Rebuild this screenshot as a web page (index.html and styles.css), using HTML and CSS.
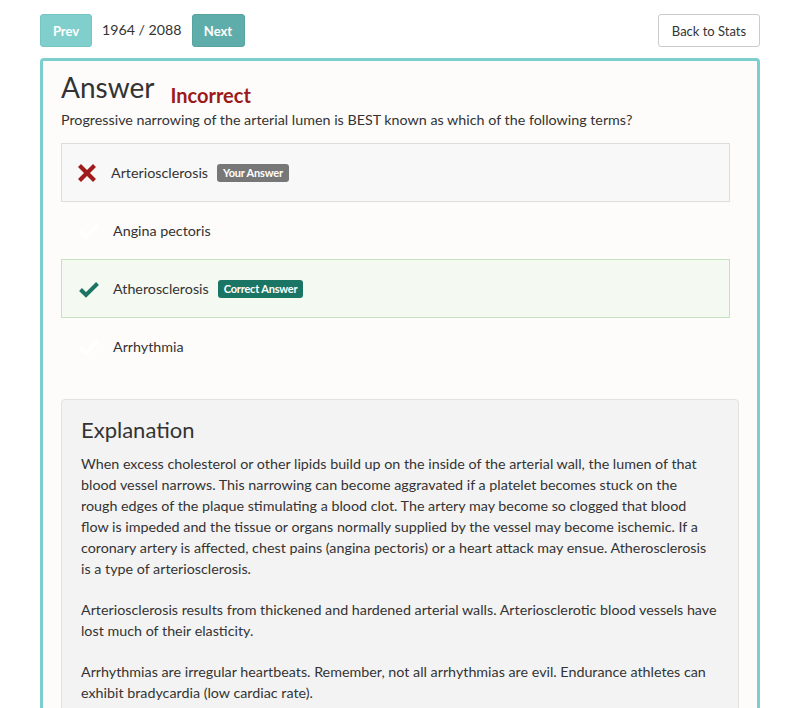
FILE: index.html
```html
<!DOCTYPE html>
<html>
<head>
<meta charset="utf-8">
<link rel="stylesheet" href="styles.css">
</head>
<body>
<div class="page">
  <div class="topbar">
    <div class="nav">
      <button class="btn btn-prev">Prev</button>
      <span class="counter">1964 / 2088</span>
      <button class="btn btn-next">Next</button>
    </div>
    <button class="btn-back">Back to Stats</button>
  </div>

  <div class="card">
    <div class="card-head">
      <h1 class="title">Answer</h1>
      <span class="status">Incorrect</span>
    </div>
    <p class="question">Progressive narrowing of the arterial lumen is BEST known as which of the following terms?</p>

    <div class="options">
      <div class="option option-wrong">
        <svg class="icon" viewBox="0 0 18 18"><path d="M3 3 L15 15 M15 3 L3 15" stroke="#a01b1b" stroke-width="4.2" stroke-linecap="square" fill="none"/></svg>
        <span class="opt-text">Arteriosclerosis</span>
        <span class="badge badge-grey">Your Answer</span>
      </div>
      <div class="option">
        <svg class="icon" viewBox="0 0 22 18"><path d="M2.5 9.5 L8 15 L19.5 3.5" stroke="#ffffff" stroke-width="4" fill="none"/></svg>
        <span class="opt-text">Angina pectoris</span>
      </div>
      <div class="option option-right">
        <svg class="icon" viewBox="0 0 22 18"><path d="M2.5 9.5 L8 15 L19.5 3.5" stroke="#1b7565" stroke-width="4" fill="none"/></svg>
        <span class="opt-text">Atherosclerosis</span>
        <span class="badge badge-green">Correct Answer</span>
      </div>
      <div class="option">
        <svg class="icon" viewBox="0 0 22 18"><path d="M2.5 9.5 L8 15 L19.5 3.5" stroke="#ffffff" stroke-width="4" fill="none"/></svg>
        <span class="opt-text">Arrhythmia</span>
      </div>
    </div>

    <div class="explanation">
      <h2 class="exp-title">Explanation</h2>
      <p>When excess cholesterol or other lipids build up on the inside of the arterial wall, the lumen of that<br>blood vessel narrows. This narrowing can become aggravated if a platelet becomes stuck on the<br>rough edges of the plaque stimulating a blood clot. The artery may become so clogged that blood<br>flow is impeded and the tissue or organs normally supplied by the vessel may become ischemic. If a<br>coronary artery is affected, chest pains (angina pectoris) or a heart attack may ensue. Atherosclerosis<br>is a type of arteriosclerosis.</p>
      <p>Arteriosclerosis results from thickened and hardened arterial walls. Arteriosclerotic blood vessels have<br>lost much of their elasticity.</p>
      <p>Arrhythmias are irregular heartbeats. Remember, not all arrhythmias are evil. Endurance athletes can<br>exhibit bradycardia (low cardiac rate).</p>
    </div>
  </div>
</div>
</body>
</html>
```

FILE: styles.css
```css
* { box-sizing: border-box; }
html, body {
  margin: 0;
  padding: 0;
  background: #ffffff;
  font-family: Lato, "Open Sans", sans-serif;
  color: #333333;
}
.page {
  width: 720px;
  margin: 0 auto;
  padding-top: 14px;
}
.topbar {
  display: flex;
  justify-content: space-between;
  align-items: center;
  height: 33px;
}
.nav {
  display: flex;
  align-items: center;
}
.btn {
  font-family: Lato, sans-serif;
  font-weight: 700;
  font-size: 13px;
  color: #ffffff;
  border: 1px solid transparent;
  border-radius: 3px;
  height: 33px;
  padding: 0;
  cursor: pointer;
}
.btn-prev {
  background: #80cfcd;
  border-color: #74c6c4;
  width: 52px;
}
.btn-next {
  background: #5fadaa;
  border-color: #56a3a0;
  width: 53px;
}
.counter {
  font-size: 14.2px;
  color: #333;
  margin: 0 10px;
  position: relative;
  top: -1px;
}
.btn-back {
  font-family: Lato, sans-serif;
  font-size: 13px;
  color: #333;
  background: #fff;
  border: 1px solid #cccccc;
  border-radius: 3px;
  height: 33px;
  width: 102px;
  padding: 0;
}
.card {
  margin-top: 11px;
  border: 3px solid #7dcfcd;
  border-radius: 4px;
  background: #fdfcfa;
  padding: 9px 18px 40px 18px;
  min-height: 700px;
}
.card-head {
  display: flex;
  align-items: baseline;
}
.title {
  font-size: 28px;
  font-weight: 400;
  margin: 0;
  line-height: 34px;
  color: #333;
}
.status {
  font-size: 20px;
  font-weight: 700;
  color: #9c1a1a;
  margin-left: 16px;
  position: relative;
  top: 5px;
}
.question {
  margin: 6px 0 13px 0;
  font-size: 14.3px;
  line-height: 20px;
}
.options {
  margin-right: 9px;
}
.option {
  display: flex;
  align-items: center;
  height: 59px;
  padding-left: 16px;
  border: 1px solid transparent;
  margin-top: -1px;
}
.option:first-child { margin-top: 0; }
.option-wrong {
  background: #f8f8f8;
  border-color: #dddddd;
}
.option-right {
  background: #f4f9f2;
  border-color: #c4e1c0;
}
.icon {
  width: 22px;
  height: 18px;
  margin-right: 13px;
  flex: none;
}
.option-wrong .icon {
  width: 18px;
  margin-right: 15px;
}
.opt-text {
  font-size: 14.3px;
  color: #333;
}
.badge {
  display: inline-block;
  margin-left: 9px;
  font-size: 11px;
  font-weight: 700;
  color: #fff;
  padding: 3px 6px;
  border-radius: 3px;
  line-height: 12px;
  letter-spacing: -0.2px;
}
.badge-grey { background: #777777; }
.badge-green { background: #1b7565; }
.explanation {
  margin-top: 23px;
  background: #f3f3f3;
  border: 1px solid #e2e2e2;
  border-radius: 4px;
  padding: 15px 18px 20px 19px;
}
.exp-title {
  font-size: 22px;
  font-weight: 400;
  margin: 0 0 8px 0;
  line-height: 30px;
  color: #333;
}
.explanation p {
  margin: 0 0 20px 0;
  font-size: 14.3px;
  line-height: 21px;
}
```
